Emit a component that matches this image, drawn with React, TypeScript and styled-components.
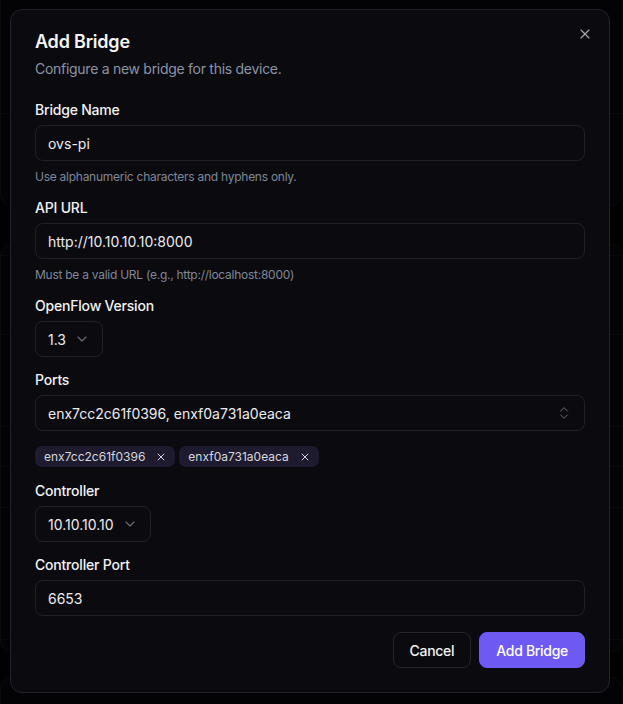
import React from "react";
import styled, { createGlobalStyle } from "styled-components";
import { X, ChevronDown, ChevronsUpDown } from "lucide-react";

const GlobalStyle = createGlobalStyle`
  html, body {
    margin: 0;
    padding: 0;
    background: #030304;
    font-family: Inter, "Noto Sans", sans-serif;
    -webkit-font-smoothing: antialiased;
  }
  * { box-sizing: border-box; }
`;

/* ---------- dimmed page behind the dialog ---------- */

const Page = styled.div`
  width: 623px;
  height: 704px;
  overflow: hidden;
  display: flex;
  flex-direction: column;
  gap: 38px;
`;

const BackCard = styled.div<{ $h: number; $top?: number }>`
  flex: none;
  height: ${(p) => p.$h}px;
  margin: ${(p) => (p.$top ? `${p.$top}px` : "0")} 0 0 0;
  border: 1px solid #15151b;
  border-radius: 12px;
  background: #07070a;
  display: flex;
  flex-direction: column;
`;

const BackRow = styled.div<{ $h: number }>`
  flex: none;
  height: ${(p) => p.$h}px;
  border-bottom: 1px solid #111116;
`;

const Overlay = styled.div`
  position: fixed;
  inset: 0;
  background: rgba(0, 0, 0, 0.45);
  display: flex;
  align-items: flex-start;
  justify-content: flex-start;
  padding: 9px 0 0 10px;
`;

/* ---------- dialog ---------- */

const Dialog = styled.div`
  position: relative;
  width: 600px;
  height: 684px;
  background: #0b0b0f;
  border: 1px solid #24222d;
  border-radius: 12px;
  padding: 23px 24px 24px;
  display: flex;
  flex-direction: column;
  color: #f4f4f6;
`;

const CloseButton = styled.button`
  position: absolute;
  top: 16px;
  right: 16px;
  width: 16px;
  height: 16px;
  padding: 0;
  border: none;
  background: transparent;
  color: #a6a6ae;
  display: flex;
  align-items: center;
  justify-content: center;
  cursor: pointer;
`;

const Header = styled.div`
  display: flex;
  flex-direction: column;
  gap: 8px;
  margin-bottom: 21px;
`;

const Title = styled.h2`
  margin: 0;
  font-size: 18px;
  line-height: 18px;
  font-weight: 600;
  letter-spacing: -0.2px;
`;

const Description = styled.p`
  margin: 0;
  font-size: 14px;
  line-height: 20px;
  letter-spacing: -0.28px;
  color: #8b93a6;
`;

const Form = styled.div`
  display: flex;
  flex-direction: column;
  gap: 13px;
`;

const Field = styled.div`
  display: flex;
  flex-direction: column;
`;

const Label = styled.label`
  font-size: 14px;
  line-height: 20px;
  font-weight: 500;
  letter-spacing: -0.2px;
  color: #f2f2f5;
  margin-bottom: 5px;
`;

const TextInput = styled.input`
  height: 36px;
  width: 100%;
  padding: 0 12px;
  background: #0b0b0f;
  border: 1px solid #201f2a;
  border-radius: 8px;
  color: #ececf0;
  font-family: inherit;
  font-size: 14px;
  outline: none;
`;

const Hint = styled.span`
  margin-top: 8px;
  font-size: 12px;
  line-height: 16px;
  letter-spacing: -0.26px;
  color: #7f8799;
`;

const SelectBox = styled.button<{ $full?: boolean }>`
  height: 36px;
  width: ${(p) => (p.$full ? "100%" : "auto")};
  align-self: flex-start;
  display: inline-flex;
  align-items: center;
  justify-content: space-between;
  gap: 8px;
  padding: 0 12px;
  background: #0b0b0f;
  border: 1px solid #201f2a;
  border-radius: 8px;
  color: #ececf0;
  font-family: inherit;
  font-size: 14px;
  svg {
    color: #6c6c78;
    flex: none;
  }
`;

const ChipRow = styled.div`
  display: flex;
  gap: 4px;
  margin-top: 15px;
  margin-bottom: 1px;
`;

const Chip = styled.span`
  height: 21px;
  display: inline-flex;
  align-items: center;
  gap: 10px;
  padding: 0 8px 0 9px;
  border-radius: 7px;
  background: #1e1b2e;
  color: #d6d6de;
  font-size: 12px;
  svg {
    color: #d6d6de;
  }
`;

const Footer = styled.div`
  margin-top: auto;
  display: flex;
  justify-content: flex-end;
  gap: 8px;
`;

const Button = styled.button<{ $primary?: boolean }>`
  height: 36px;
  padding: 0 16px;
  border-radius: 8px;
  font-family: inherit;
  font-size: 14px;
  font-weight: 500;
  letter-spacing: -0.3px;
  cursor: pointer;
  border: 1px solid ${(p) => (p.$primary ? "#6e5af3" : "#25232e")};
  background: ${(p) => (p.$primary ? "#6e5af3" : "#0b0b0f")};
  color: ${(p) => (p.$primary ? "#ffffff" : "#f2f2f5")};
`;

const ports = ["enx7cc2c61f0396", "enxf0a731a0eaca"];

export default function App() {
  return (
    <>
      <GlobalStyle />
      <Page>
        <BackCard $h={216} $top={-10}>
          <BackRow $h={123} />
        </BackCard>
        <BackCard $h={408}>
          <BackRow $h={11} />
          <BackRow $h={79} />
          <BackRow $h={92} />
          <BackRow $h={40} />
          <BackRow $h={41} />
          <BackRow $h={132} />
        </BackCard>
        <BackCard $h={80} $top={-13} />
      </Page>
      <Overlay>
        <Dialog role="dialog">
          <CloseButton aria-label="Close">
            <X size={16} strokeWidth={1.75} />
          </CloseButton>
          <Header>
            <Title>Add Bridge</Title>
            <Description>Configure a new bridge for this device.</Description>
          </Header>
          <Form>
            <Field>
              <Label>Bridge Name</Label>
              <TextInput defaultValue="ovs-pi" />
              <Hint>Use alphanumeric characters and hyphens only.</Hint>
            </Field>
            <Field>
              <Label>API URL</Label>
              <TextInput defaultValue="http://10.10.10.10:8000" />
              <Hint>Must be a valid URL (e.g., http://localhost:8000)</Hint>
            </Field>
            <Field>
              <Label>OpenFlow Version</Label>
              <SelectBox>
                1.3
                <ChevronDown size={16} strokeWidth={1.75} />
              </SelectBox>
            </Field>
            <Field>
              <Label>Ports</Label>
              <SelectBox $full>
                {ports.join(", ")}
                <ChevronsUpDown size={16} strokeWidth={1.5} />
              </SelectBox>
              <ChipRow>
                {ports.map((p) => (
                  <Chip key={p}>
                    {p}
                    <X size={12} strokeWidth={2} />
                  </Chip>
                ))}
              </ChipRow>
            </Field>
            <Field>
              <Label>Controller</Label>
              <SelectBox>
                10.10.10.10
                <ChevronDown size={16} strokeWidth={1.75} />
              </SelectBox>
            </Field>
            <Field>
              <Label>Controller Port</Label>
              <TextInput defaultValue="6653" />
            </Field>
          </Form>
          <Footer>
            <Button>Cancel</Button>
            <Button $primary>Add Bridge</Button>
          </Footer>
        </Dialog>
      </Overlay>
    </>
  );
}
